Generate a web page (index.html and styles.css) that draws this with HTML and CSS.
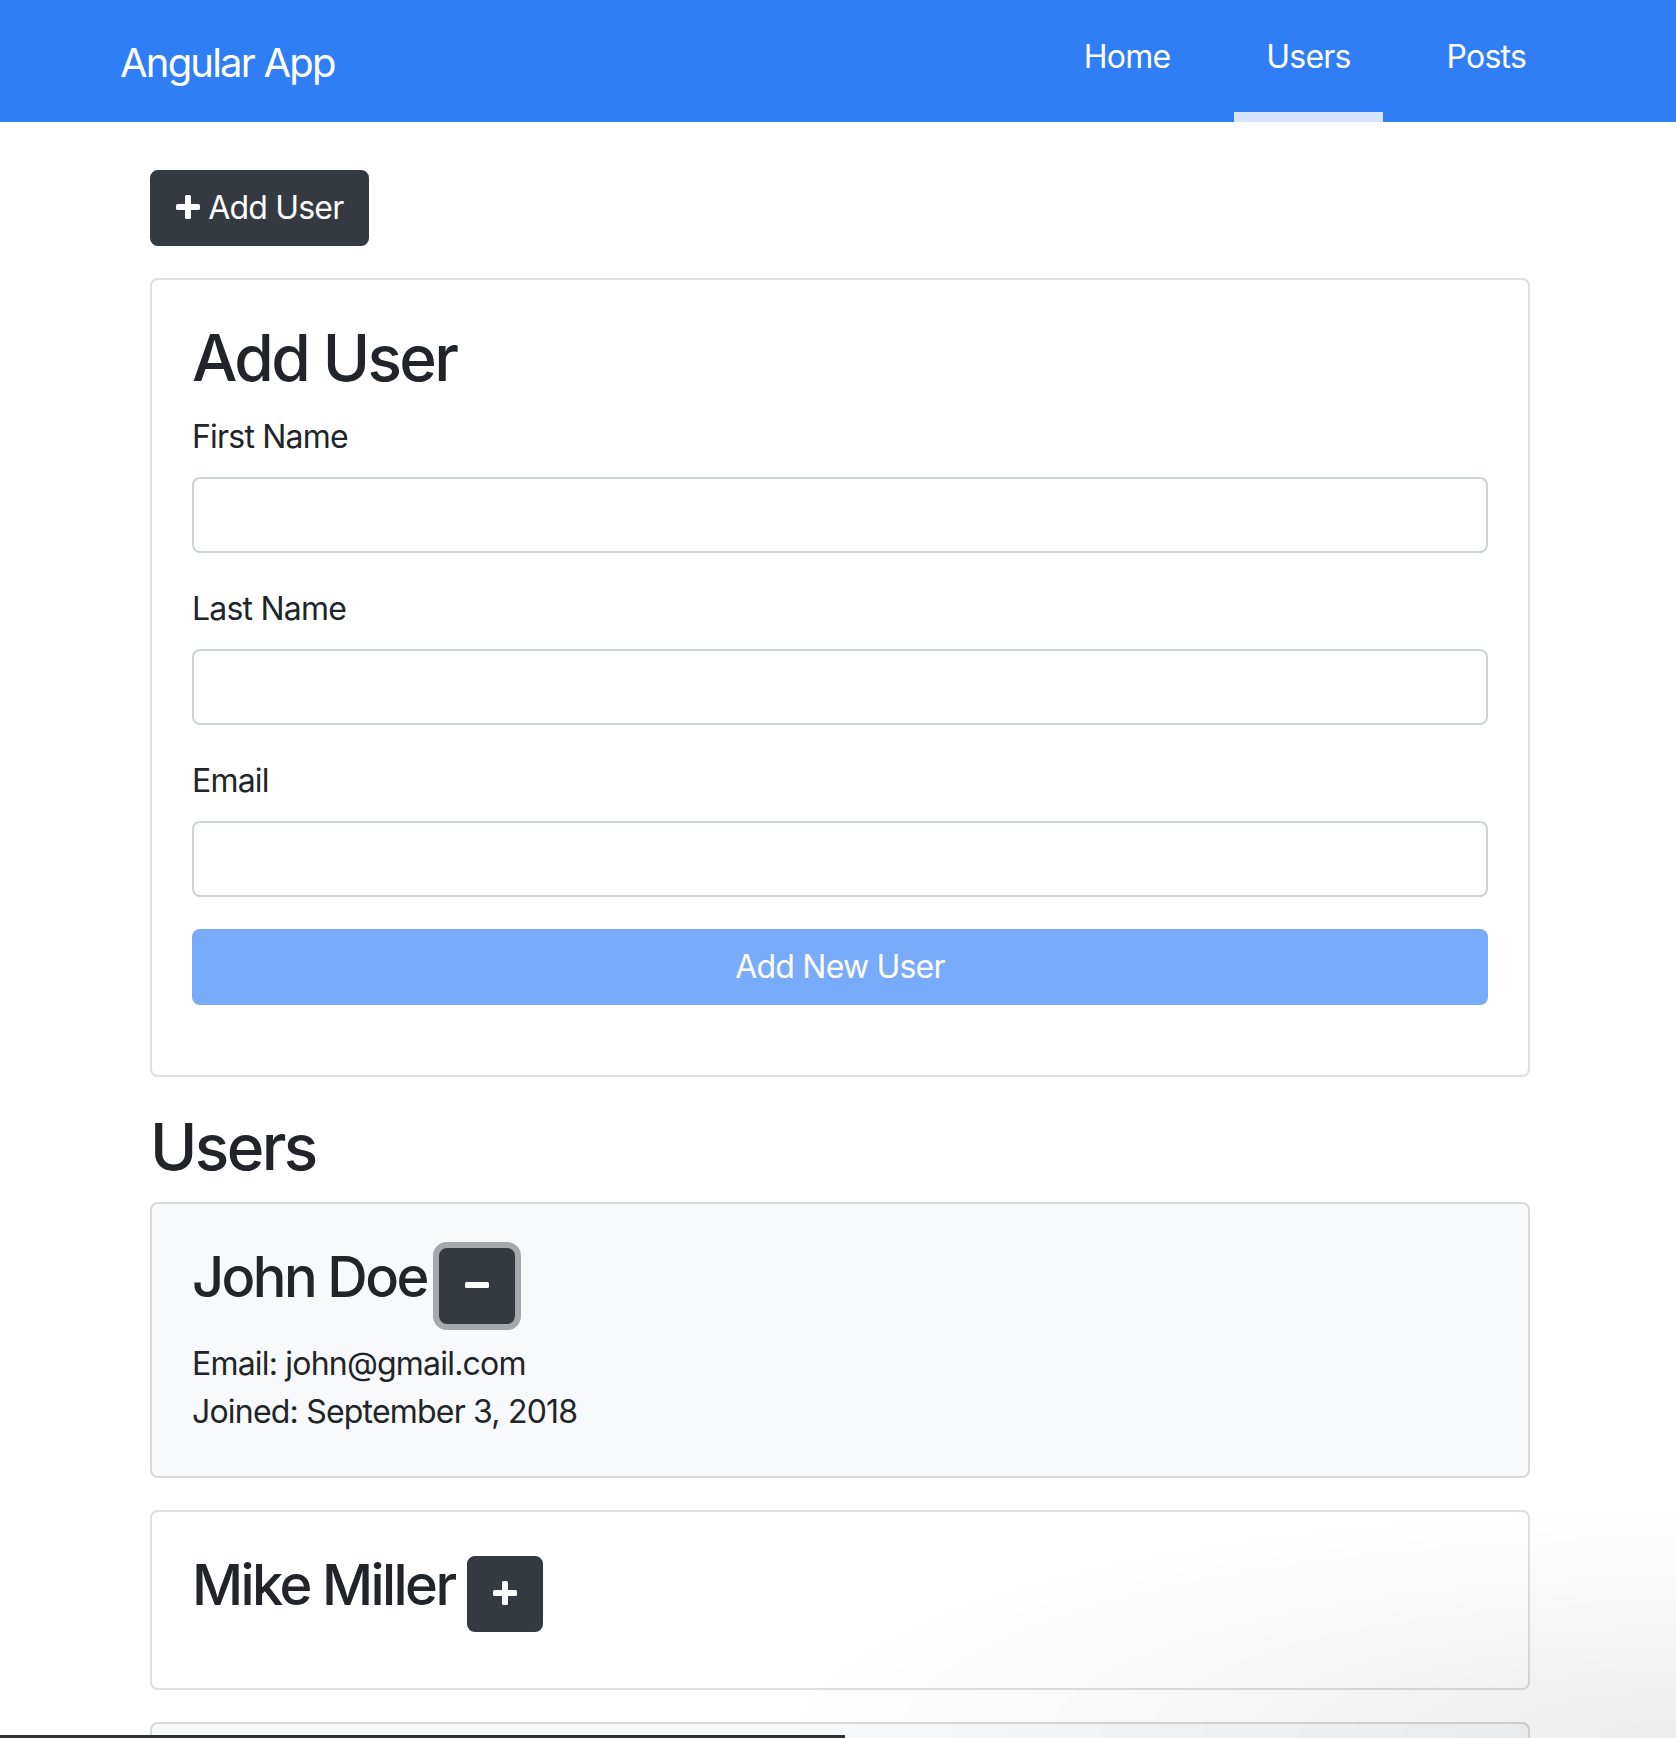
FILE: index.html
```html
<!DOCTYPE html>
<html lang="en">
<head>
<meta charset="utf-8">
<title>Angular App</title>
<link rel="stylesheet" href="styles.css">
</head>
<body>
<nav class="navbar">
  <div class="navbar-inner">
    <a class="brand" href="#">Angular App</a>
    <ul class="nav">
      <li><a class="nav-link" href="#">Home</a></li>
      <li><a class="nav-link active" href="#">Users</a></li>
      <li><a class="nav-link" href="#">Posts</a></li>
    </ul>
  </div>
</nav>

<main class="container">
  <div class="toolbar">
    <button class="btn btn-dark" type="button"><svg class="icon" viewBox="0 0 24 24" width="24" height="24"><rect x="9" y="0" width="6" height="24" rx="1.5"/><rect x="0" y="9" width="24" height="6" rx="1.5"/></svg> Add User</button>
  </div>

  <div class="card">
    <div class="card-body">
      <h2 class="heading">Add User</h2>
      <form class="user-form">
        <div class="form-group">
          <label class="label">First Name</label>
          <input class="form-control" type="text">
        </div>
        <div class="form-group">
          <label class="label">Last Name</label>
          <input class="form-control" type="text">
        </div>
        <div class="form-group">
          <label class="label">Email</label>
          <input class="form-control" type="email">
        </div>
        <button class="btn btn-primary btn-block" type="submit" disabled>Add New User</button>
      </form>
    </div>
  </div>

  <h2 class="heading">Users</h2>
  <ul class="user-list">
    <li class="card card-light">
      <div class="card-body">
        <h3 class="user-name">John Doe <button class="btn btn-dark btn-icon is-focused" type="button"><svg class="icon" viewBox="0 0 24 24" width="24" height="24"><rect x="0" y="9" width="24" height="6" rx="1.5"/></svg></button></h3>
        <ul class="details">
          <li>Email: john@gmail.com</li>
          <li>Joined: September 3, 2018</li>
        </ul>
      </div>
    </li>
    <li class="card">
      <div class="card-body">
        <h3 class="user-name">Mike Miller <button class="btn btn-dark btn-icon" type="button"><svg class="icon" viewBox="0 0 24 24" width="24" height="24"><rect x="9" y="0" width="6" height="24" rx="1.5"/><rect x="0" y="9" width="24" height="6" rx="1.5"/></svg></button></h3>
      </div>
    </li>
    <li class="card card-light card-cut"></li>
  </ul>
</main>

<div class="screen-shadow"></div>
<div class="dock-edge"></div>
</body>
</html>
```

FILE: styles.css
```css
* {
  box-sizing: border-box;
}

html {
  overflow: hidden;
}

body {
  margin: 0;
  font-family: Inter, "Noto Sans", sans-serif;
  font-size: 32px;
  line-height: 48px;
  letter-spacing: -0.8px;
  color: #212529;
  background: #ffffff;
}

/* ---------- navbar ---------- */
.navbar {
  background: #2f7ef6;
  height: 122px;
}

.navbar-inner {
  width: 1438px;
  height: 100%;
  margin-left: 120px;
  display: flex;
  justify-content: space-between;
  align-items: flex-start;
}

.brand {
  color: #ffffff;
  text-decoration: none;
  font-size: 40px;
  line-height: 60px;
  letter-spacing: -1.8px;
  margin-top: 33px;
}

.nav {
  list-style: none;
  margin: 0;
  padding: 0;
  display: flex;
  gap: 32px;
  height: 100%;
}

.nav-link {
  display: block;
  height: 122px;
  padding: 33px 32px 0;
  color: #ffffff;
  text-decoration: none;
}

.nav-link.active {
  box-shadow: inset 0 -10px 0 #d6e4fd;
}

/* ---------- content ---------- */
.container {
  width: 1380px;
  margin: 48px 0 0 150px;
}

.toolbar {
  display: flex;
  margin-bottom: 32px;
}

.btn {
  display: inline-block;
  margin: 0;
  font-family: inherit;
  font-size: 32px;
  font-weight: 400;
  line-height: 48px;
  letter-spacing: -0.8px;
  padding: 12px 24px;
  border: 2px solid transparent;
  border-radius: 8px;
  color: #ffffff;
  text-align: center;
  vertical-align: baseline;
  cursor: pointer;
}

.btn-dark {
  background: #343a40;
  border-color: #343a40;
}

.btn-primary {
  background: #78abf9;
  border-color: #78abf9;
}

.btn-block {
  display: block;
  width: 100%;
}

.icon {
  fill: #ffffff;
  vertical-align: baseline;
}

.is-focused {
  box-shadow: 0 0 0 6px rgba(82, 88, 93, 0.5);
}

.card {
  background: #ffffff;
  border: 2px solid rgba(0, 0, 0, 0.125);
  border-radius: 8px;
  margin-bottom: 32px;
}

.card-light {
  background: #f8f9fa;
}

.card-body {
  padding: 40px;
}

.heading {
  margin: 0 0 16px;
  font-size: 64px;
  font-weight: 500;
  line-height: 76.8px;
  letter-spacing: -2.6px;
}

.user-form {
  margin: 0 0 30px;
}

.form-group {
  margin-bottom: 32px;
}

.label {
  display: block;
  margin-bottom: 16px;
}

.form-control {
  display: block;
  width: 100%;
  height: 76px;
  padding: 12px 24px;
  font-family: inherit;
  font-size: 32px;
  color: #495057;
  background: #ffffff;
  border: 2px solid #ced4da;
  border-radius: 8px;
}

.user-list {
  list-style: none;
  margin: 0;
  padding: 0;
}

.user-name {
  margin: 0 0 16px;
  font-size: 56px;
  font-weight: 500;
  line-height: 67.2px;
  letter-spacing: -2.6px;
}

.details {
  list-style: none;
  margin: 0;
  padding: 0;
}

.card-cut {
  height: 200px;
}

/* ---------- screenshot edge artifacts (overlay) ---------- */
.screen-shadow {
  position: fixed;
  right: 0;
  bottom: 0;
  width: 900px;
  height: 230px;
  pointer-events: none;
  background: radial-gradient(ellipse 900px 230px at 100% 100%, rgba(0, 0, 0, 0.07), rgba(0, 0, 0, 0));
}

.dock-edge {
  position: fixed;
  left: 0;
  bottom: 0;
  width: 845px;
  height: 3px;
  background: #2e3033;
}
```
